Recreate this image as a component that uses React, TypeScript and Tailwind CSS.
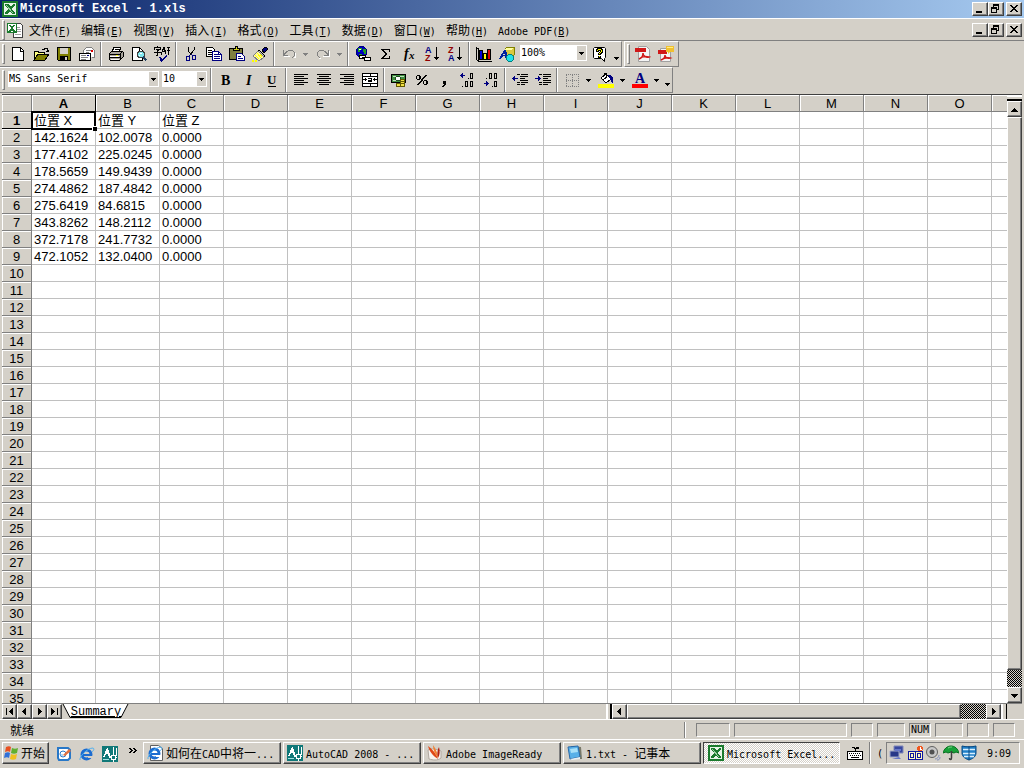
import type { ReactNode } from 'react'

const MENUS = [
  ['文件', 'F'],
  ['编辑', 'E'],
  ['视图', 'V'],
  ['插入', 'I'],
  ['格式', 'O'],
  ['工具', 'T'],
  ['数据', 'D'],
  ['窗口', 'W'],
  ['帮助', 'H'],
  ['Adobe PDF', 'B'],
]

// the last column is only partly in view and carries no letter
const COLS = [...'ABCDEFGHIJKLMNO'.split(''), '']

const DATA = [
  ['位置 X', '位置 Y', '位置 Z'],
  ['142.1624', '102.0078', '0.0000'],
  ['177.4102', '225.0245', '0.0000'],
  ['178.5659', '149.9439', '0.0000'],
  ['274.4862', '187.4842', '0.0000'],
  ['275.6419', '84.6815', '0.0000'],
  ['343.8262', '148.2112', '0.0000'],
  ['372.7178', '241.7732', '0.0000'],
  ['472.1052', '132.0400', '0.0000'],
]

const RAISED = 'border border-t-white border-l-white border-r-[#404040] border-b-[#404040] bg-[#d4d0c8] shadow-[inset_-1px_-1px_0_#808080]'
const SUNKEN = 'border border-t-[#808080] border-l-[#808080] border-r-white border-b-white'
const DITHER = 'bg-[repeating-conic-gradient(#000_0_25%,#d4d0c8_0_50%)] bg-[length:2px_2px]'
const LATIN = "font-['DejaVu_Sans_Mono','Noto_Sans_CJK_SC',monospace] text-[10px]"

// Chinese runs are set at 12px, latin runs in the 6px-wide mono face
function Label({ text, hotkey }: { text: string; hotkey?: string }) {
  const parts = text.match(/[\u4e00-\u9fff]+|[^\u4e00-\u9fff]+/g) ?? []
  return (
    <span className="block whitespace-pre font-['Noto_Sans_CJK_SC',sans-serif] text-xs leading-4">
      {parts.map((p, i) =>
        /[\u4e00-\u9fff]/.test(p) ? (
          <span key={i}>{p}</span>
        ) : (
          <span key={i} className={`${LATIN} leading-none`}>{p}</span>
        )
      )}
      {hotkey && <span className={`${LATIN} leading-none`}>(<u>{hotkey}</u>)</span>}
    </span>
  )
}

function Ico({ children, smooth }: { children: ReactNode; smooth?: boolean }) {
  return (
    <svg viewBox="0 0 16 16" className="w-4 h-4 shrink-0" shapeRendering={smooth ? 'auto' : 'crispEdges'} fill="none" aria-hidden="true">
      {children}
    </svg>
  )
}

function Glyph({ x, y, size, fill = '#000', children, family = 'Liberation Serif', italic }: { x: number; y: number; size: number; fill?: string; children: ReactNode; family?: string; italic?: boolean }) {
  return (
    <text x={x} y={y} fontSize={size} fill={fill} fontFamily={`${family}, serif`} fontWeight="bold" fontStyle={italic ? 'italic' : 'normal'}>
      {children}
    </text>
  )
}

function Tool({ name, children }: { name: string; children: ReactNode }) {
  return (
    <button aria-label={name} className="w-[23px] h-[22px] flex items-center justify-center shrink-0">
      {children}
    </button>
  )
}

function Caret({ wide, dim, low }: { wide?: boolean; dim?: boolean; low?: boolean }) {
  return (
    <button aria-label="更多" className={`${wide ? 'w-[11px]' : 'w-[10px]'} h-[22px] flex items-center justify-center shrink-0 ${low ? 'pt-2' : ''}`}>
      <svg viewBox="0 0 5 3" className="w-[5px] h-[3px]" shapeRendering="crispEdges">
        <path d="M0 0h5v1H4v1H3v1H2V2H1V1H0z" fill={dim ? '#808080' : '#000'} />
      </svg>
    </button>
  )
}

function Sep() {
  return (
    <div className="w-[6px] flex justify-center self-stretch shrink-0">
      <div className="w-[2px] bg-[#808080] border-r border-white" />
    </div>
  )
}

function Handle() {
  return <div className="w-[3px] h-5 ml-[2px] mr-px border border-t-white border-l-white border-r-[#808080] border-b-[#808080] shrink-0" />
}

function Combo({ label, value, width }: { label: string; value: string; width: string }) {
  return (
    <div className={`relative bg-white h-4 shrink-0 ${width}`}>
      <select aria-label={label} className={`appearance-none block w-full h-4 pl-px pr-3 leading-4 outline-none ${LATIN}`}>
        <option>{value}</option>
      </select>
      <span className="absolute right-px top-px w-[9px] h-[14px] bg-[#d4d0c8] flex items-center justify-center pointer-events-none">
        <svg viewBox="0 0 5 3" className="w-[5px] h-[3px]" shapeRendering="crispEdges">
          <path d="M0 0h5v1H4v1H3v1H2V2H1V1H0z" fill="#000" />
        </svg>
      </span>
    </div>
  )
}

function ExcelIcon() {
  return (
    <Ico>
      <path d="M0 0h16v16H0z" fill="#1a7a2c" />
      <path d="M2 2h12v12H2z" fill="#e8f4e8" />
      <path d="M3 3h4l2 3 2-3h2v1l-3 4 3 4v1h-3l-2-3-2 3H3v-1l3-4-3-4z" fill="#1a7a2c" />
      <path d="M4 4l7 8" stroke="#9fd0a4" />
    </Ico>
  )
}

function WinButtons() {
  return (
    <div className="flex mr-[2px]">
      <button aria-label="最小化" className={`w-4 h-[14px] flex items-center justify-center ${RAISED}`}>
        <svg viewBox="0 0 12 10" className="w-3 h-[10px]" shapeRendering="crispEdges"><path d="M2 7h6v2H2z" /></svg>
      </button>
      <button aria-label="还原" className={`w-4 h-[14px] flex items-center justify-center ${RAISED}`}>
        <svg viewBox="0 0 12 10" className="w-3 h-[10px]" shapeRendering="crispEdges">
          <path d="M3 0h6v6H7V5h1V2H4v1H3z" />
          <path d="M1 3h6v6H1zM2 5v3h4V5z" fillRule="evenodd" />
        </svg>
      </button>
      <button aria-label="关闭" className={`w-4 h-[14px] ml-[2px] flex items-center justify-center ${RAISED}`}>
        <svg viewBox="0 0 12 10" className="w-3 h-[10px]" shapeRendering="crispEdges">
          <path d="M2 1h2v1h1v1h2V2h1V1h2v1H9v1H8v1H7v1h1v1h1v1h1v1H8V7H7V6H5v1H4v1H2V7h1V6h1V5h1V4H4V3H3V2H2z" />
        </svg>
      </button>
    </div>
  )
}

function StandardBar() {
  return (
    <div className="flex">
      <div role="toolbar" aria-label="常用" className="h-[26px] flex items-center border border-l-0 border-t-white border-r-[#808080] border-b-[#808080]">
        <Handle />
        <Tool name="新建">
          <Ico><path d="M2.5 1.5h8l3 3v10h-11z" fill="#fff" stroke="#000" /><path d="M10.5 1v4H14" stroke="#000" /></Ico>
        </Tool>
        <Tool name="打开">
          <Ico>
            <path d="M9 3h2V2h3v2h1v2M13 5h3" stroke="#000" />
            <path d="M1 5h4v1h6v3H5l-4 5z" fill="#ffff80" stroke="#000" />
            <path d="M1 14l4-6h11l-4 6z" fill="#808000" stroke="#000" />
          </Ico>
        </Tool>
        <Tool name="保存">
          <Ico>
            <path d="M1.5 1.5h13v13h-12l-1-1z" fill="#808000" stroke="#000" />
            <path d="M4 2h8v6H4z" fill="#d4d0c8" /><path d="M4 10h8v5H4z" fill="#000" /><path d="M9 11h2v3H9z" fill="#d4d0c8" />
          </Ico>
        </Tool>
        <Tool name="电子邮件">
          <Ico>
            <path d="M4.5 8V4.5l3-3h5l3 3v7H13" fill="#fff" stroke="#808080" />
            <path d="M7 4h5M7 6h3" stroke="#808080" /><path d="M12 4h2v2h-2z" fill="#d00" />
            <path d="M.5 7.5h11v7H.5z" fill="#fff" stroke="#000" /><path d="M2 9.5h5M2 11.5h7M2 13h5" stroke="#808080" /><path d="M8 9h2v1H8z" fill="#000080" />
          </Ico>
        </Tool>
        <Sep />
        <Tool name="打印">
          <Ico>
            <path d="M4 6l2-5h7l-2 5" fill="#fff" stroke="#000" /><path d="M7 3h4M6 5h4" stroke="#000" />
            <path d="M1 8l3-3h10l1 1v5l-3 3H2l-1-1z" fill="#a8a49c" stroke="#000" />
            <path d="M1 8.5h11M1 11.5h12M12 8l3-3M12 14V8" stroke="#000" /><path d="M2 10h9M3 13h8" stroke="#fff" /><path d="M8 9h2v1H8z" fill="#ffff00" />
          </Ico>
        </Tool>
        <Tool name="打印预览">
          <Ico>
            <path d="M1.5 1.5h7l3 3v10h-10z" fill="#fff" stroke="#000" /><path d="M8.5 1v4H12" stroke="#000" />
            <circle cx="10" cy="8.5" r="3.5" fill="#80e8f0" stroke="#404040" /><path d="M9 7h2M8 9h1" stroke="#fff" />
            <path d="M12 11l3.5 3.5" stroke="#204060" strokeWidth="2" />
          </Ico>
        </Tool>
        <Tool name="拼写检查">
          <Ico>
            <path d="M.5 3.5v-2h6v2M3.5 0v2M2 3.5h3L3.5 5v4H2M0 6.5h7" stroke="#000" />
            <path d="M7 8.5L10 1l2 7M8 5.5h4M13 1.5h2l-1 3h1l-1 4" stroke="#000" />
            <path d="M5 11h1l2 2 5-5v2l-5 6H7z" fill="#000080" />
          </Ico>
        </Tool>
        <Sep />
        <Tool name="剪切">
          <Ico>
            <path d="M5 1v3l3 5M11 1v3L7 9" stroke="#000" />
            <path d="M8 8l2 2M7 9l-1 1" stroke="#000080" />
            <rect x="3.5" y="10.5" width="3" height="4" stroke="#000080" /><rect x="9.5" y="9.5" width="3" height="4" stroke="#000080" />
          </Ico>
        </Tool>
        <Tool name="复制">
          <Ico>
            <path d="M.5 1.5h6l2 2v7h-8z" fill="#fff" stroke="#000" /><path d="M2 4.5h4M2 6.5h4M2 8.5h4" stroke="#000" />
            <path d="M6.5 5.5h6l3 3v6h-9z" fill="#fff" stroke="#000080" /><path d="M8 8.5h4M8 10.5h6M8 12.5h6M12.5 5v3H15" stroke="#000080" />
          </Ico>
        </Tool>
        <Tool name="粘贴">
          <Ico>
            <path d="M.5 2.5h13v11H.5z" fill="#808040" stroke="#000" /><path d="M4 4.5V2h2V.5h2V2h2v2.5z" fill="#d4d020" stroke="#000" />
            <path d="M7.5 7.5h5l3 3v4h-8z" fill="#fff" stroke="#000080" /><path d="M9 10.5h3M9 12.5h5" stroke="#000080" />
          </Ico>
        </Tool>
        <Tool name="格式刷">
          <Ico>
            <path d="M10 4l3-3 2 1v2l-3 3z" fill="#000080" stroke="#000" />
            <path d="M7 4l6 6-1 1-6-6z" fill="#c0c0c0" stroke="#000" />
            <path d="M6 5l6 6-5 4-6-5z" fill="#fff8a0" stroke="#808080" /><path d="M5 7l4 5M3 9l4 4M8 8l2 3" stroke="#ffff00" />
            <path d="M0 14.5h6" stroke="#ffff00" strokeWidth="2" strokeDasharray="2 1" />
          </Ico>
        </Tool>
        <Sep />
        <Tool name="撤消">
          <Ico>
            <path d="M3 10.5h6M14.5 7v4h-2" stroke="#fff" />
            <path d="M2 4h1v3h1V6h1V5h2V4h5v1h1v1h1v4h-1v1h-1v1h-1v-1h1v-1h1V6h-1V5H7v1H6v1H5v1H4v1h3v1H2z" fill="#808080" />
          </Ico>
        </Tool>
        <Caret wide dim />
        <Tool name="恢复">
          <Ico>
            <path d="M8 10.5h6.500V5M4 12h2" stroke="#fff" />
            <path d="M14 4h-1v3h-1V6h-1V5H9V4H4v1H3v1H2v4h1v1h1v1h1v-1H4v-1H3V6h1V5h5v1h1v1h1v1h1v1H9v1h5z" fill="#808080" />
          </Ico>
        </Tool>
        <Caret wide dim />
        <Sep />
        <Tool name="超链接">
          <Ico>
            <circle cx="6.5" cy="6" r="5.5" fill="#0000c0" stroke="#000080" />
            <path d="M3 2h4v2H5v2H3zM8 3h3v5H9V6H8zM4 8h3v3H5z" fill="#20a020" /><path d="M4 3h2v1H4z" fill="#fff" />
            <rect x="4.5" y="9.5" width="6" height="3" rx="1" fill="#fff" stroke="#000" /><rect x="9.5" y="11.5" width="6" height="3" rx="1" fill="#fff" stroke="#000" /><path d="M7 11.5h5" stroke="#000" />
          </Ico>
        </Tool>
        <Tool name="自动求和">
          <Ico><path d="M3 3h9v3h-1V4H6l3 4-4 4h6v-2h1v3H3v-1l4-4-4-4z" fill="#000" /></Ico>
        </Tool>
        <Tool name="粘贴函数">
          <Ico smooth><Glyph x={3} y={12} size={14} italic>f</Glyph><Glyph x={8} y={13} size={11} italic>x</Glyph></Ico>
        </Tool>
        <Tool name="升序排序">
          <Ico>
            <Glyph x={1} y={7} size={9} fill="#000080" family="Liberation Sans">A</Glyph>
            <Glyph x={1} y={15} size={9} fill="#900000" family="Liberation Sans">Z</Glyph>
            <path d="M12 1h1v10h2v1h-1v1h-1v1h-1v-1h-1v-1h-1v-1h2z" fill="#000" />
          </Ico>
        </Tool>
        <Tool name="降序排序">
          <Ico>
            <Glyph x={1} y={7} size={9} fill="#900000" family="Liberation Sans">Z</Glyph>
            <Glyph x={1} y={15} size={9} fill="#000080" family="Liberation Sans">A</Glyph>
            <path d="M12 1h1v10h2v1h-1v1h-1v1h-1v-1h-1v-1h-1v-1h2z" fill="#000" />
          </Ico>
        </Tool>
        <Sep />
        <Tool name="图表向导">
          <Ico>
            <path d="M.5 1v12.500l2 2H16M1 2.500h1v12" stroke="#000" />
            <path d="M3.5 4.5h3v9h-3z" fill="#0000e0" stroke="#000" /><path d="M7.5 7.500h3v6h-3z" fill="#ffff00" stroke="#000" /><path d="M11.5 3.5h3v10h-3z" fill="#e00000" stroke="#000" />
          </Ico>
        </Tool>
        <Tool name="绘图">
          <Ico>
            <path d="M6 3l2-2h7v8l-2 2H6z" fill="#d8c840" stroke="#808000" /><path d="M7 2h7l-2 2H6z" fill="#ffffa0" />
            <path d="M0 13L5 4h2l2 9H7l-1-3H4l-2 3z" fill="#0020a0" /><path d="M5 7l1 2H4z" fill="#d4d0c8" />
            <circle cx="11" cy="12" r="3.5" fill="#20e0e8" stroke="#008080" />
          </Ico>
        </Tool>
        <div className="pl-[2px] pb-[2px]"><Combo label="显示比例" value="100%" width="w-[67px]" /></div>
        <div className="w-px" />
        <Tool name="帮助">
          <Ico smooth>
            <path d="M2.5 1.5h10l1 1v9l-1 1v3l-3-3h-7l-1-1v-9z" fill="#fff" stroke="#000" />
            <path d="M4 5V3h1V2h5v1h1v4h-1v1H9v1H6V7h1V6h1V5H7v1H4zM6 10h3v2H6z" fill="#000" />
            <path d="M5 5V4h1V3h3v1h1v2H9v1H8v1H7V7h1V6h1V4H6v1zM7 10h1v1H7z" fill="#ffff00" />
          </Ico>
        </Tool>
        <Caret low />
      </div>
      <div role="toolbar" aria-label="PDF" className="h-[26px] flex items-center border border-t-white border-l-white border-r-[#808080] border-b-[#808080] ml-[2px] pr-px">
        <Handle />
        <Tool name="转换为 PDF">
          <Ico smooth>
            <path d="M3.5.5h8l3 3v12h-11z" fill="#f4f4f4" stroke="#a0a0a0" /><path d="M0 2h11v4H0z" fill="#d01818" />
            <path d="M4 13c3-1 4-4 4-6 0 3 3 5 6 4-4-1-7-1-10 2z" stroke="#d01818" strokeWidth="1.5" />
          </Ico>
        </Tool>
        <Tool name="转换并发送">
          <Ico smooth>
            <path d="M2.5 2.5h8l2 3v10h-10z" fill="#f4f4f4" stroke="#a0a0a0" /><path d="M0 4h9v4H0z" fill="#d01818" />
            <path d="M3 14c3-1 4-3 4-5 0 2 2 4 5 3-4-1-6 0-9 2z" stroke="#d01818" strokeWidth="1.5" />
            <path d="M8 0h8v6h-4l-2 2V6H8z" fill="#f0c030" /><path d="M9 1.5h6" stroke="#fff080" />
          </Ico>
        </Tool>
      </div>
    </div>
  )
}

function FormatBar() {
  return (
    <div className="flex">
      <div role="toolbar" aria-label="格式" className="h-[26px] flex items-center border border-l-0 border-t-white border-r-[#808080] border-b-[#808080]">
        <Handle />
        <div className="flex gap-[3px] pl-[2px] pr-px pb-[2px]">
          <Combo label="字体" value="MS Sans Serif" width="w-[151px]" />
          <Combo label="字号" value="10" width="w-[45px]" />
        </div>
        <Sep />
        <Tool name="加粗"><Ico smooth><Glyph x={3} y={13} size={14}>B</Glyph></Ico></Tool>
        <Tool name="倾斜"><Ico smooth><Glyph x={5} y={13} size={14} italic>I</Glyph></Ico></Tool>
        <Tool name="下划线"><Ico smooth><Glyph x={3} y={12} size={13}>U</Glyph><path d="M4 14h8v1H4z" fill="#000" /></Ico></Tool>
        <Sep />
        <Tool name="左对齐"><Ico><path d="M1 2.5h14M1 4.5h10M1 6.5h14M1 8.5h10M1 10.5h14M1 12.5h10" stroke="#000" /></Ico></Tool>
        <Tool name="居中"><Ico><path d="M1 2.5h14M3 4.5h10M1 6.5h14M3 8.5h10M1 10.5h14M3 12.5h10" stroke="#000" /></Ico></Tool>
        <Tool name="右对齐"><Ico><path d="M1 2.5h14M5 4.5h10M1 6.5h14M5 8.5h10M1 10.5h14M5 12.5h10" stroke="#000" /></Ico></Tool>
        <Tool name="合并及居中">
          <Ico>
            <path d="M0 1h16v14H0z" fill="#fff" /><path d="M.5 1.5h15v13H.5zM0 4.5h16M0 11.5h16M8.5 1v4M8.5 11v4" stroke="#000" />
            <path d="M1 7.500h4M11 7.500h4M3.500 6v3M12.500 6v3" stroke="#000" /><path d="M6 6h4v4H6V8h3V7H6zM7 9h2v0H7z" fill="#000" />
          </Ico>
        </Tool>
        <Sep />
        <Tool name="货币样式">
          <Ico>
            <path d="M.5 2.5h14v8H.5z" fill="#409040" stroke="#000" /><path d="M2 4.5h11M2 8.5h5" stroke="#c0e0c0" /><circle cx="7" cy="6.5" r="2.5" fill="#fff" stroke="#205020" />
            <path d="M9.500 7.500h4v7h-4zM5.500 11.500h4v3h-4z" fill="#f0e040" stroke="#605800" /><path d="M10 9.5h3M10 11.5h3" stroke="#605800" />
          </Ico>
        </Tool>
        <Tool name="百分比样式">
          <Ico><path d="M2 4h1V3h3v1h1v3H6v1H3V7H2zM3 4v3h2V4zM9 9h1V8h3v1h1v3h-1v1h-3v-1H9zM10 9v3h2V9z" fill="#000" fillRule="evenodd" /><path d="M12 3l-8 10" stroke="#000" strokeWidth="1.5" /></Ico>
        </Tool>
        <Tool name="千位分隔样式">
          <Ico><path d="M6 9h3v4H8v1H7v1H5v-1h1v-1h1v-1H6z" fill="#000" /></Ico>
        </Tool>
        <Tool name="增加小数位数">
          <Ico>
            <path d="M0 3h1V2h1V1h1v2h2v1H3v2H2V5H1V4H0z" fill="#000080" />
            <path d="M8 6h1v1H8zM2 14h1v1H2z" fill="#000" /><rect x="10.5" y="1.500" width="2" height="5" stroke="#000" /><rect x="5.5" y="9.500" width="2" height="5" stroke="#000" /><rect x="10.5" y="9.500" width="2" height="5" stroke="#000" />
          </Ico>
        </Tool>
        <Tool name="减少小数位数">
          <Ico>
            <path d="M1 11h2V9h1v1h1v1h1v1H5v1H4v1H3v-2H1z" fill="#000080" />
            <path d="M3 6h1v1H3zM9 14h1v1H9z" fill="#000" /><rect x="6.5" y="1.500" width="2" height="5" stroke="#000" /><rect x="11.5" y="1.500" width="2" height="5" stroke="#000" /><rect x="11.5" y="9.500" width="2" height="5" stroke="#000" />
          </Ico>
        </Tool>
        <Sep />
        <Tool name="减少缩进量">
          <Ico><path d="M5 2.5h3M9 2.5h7M8 4.5h8M8 6.5h5M8 8.5h8M5 10.5h3M9 10.5h7M5 12.5h3M9 12.5h4" stroke="#000" /><path d="M0 6h1V5h1V4h1v2h3v1H3v2H2V8H1V7H0z" fill="#000080" /></Ico>
        </Tool>
        <Tool name="增加缩进量">
          <Ico><path d="M4 2.5h3M8 2.5h8M8 4.5h8M8 6.5h5M8 8.5h8M4 10.5h3M8 10.5h8M4 12.5h3M8 12.5h5" stroke="#000" /><path d="M0 6h3V4h1v1h1v1h1v1H5v1H4v1H3V7H0z" fill="#000080" /></Ico>
        </Tool>
        <Sep />
        <Tool name="边框">
          <Ico><path d="M2 2.5h12M2 8.5h12M2 14.5h12M2.5 3v12M8.5 3v12M14.5 2v13" stroke="#808080" strokeDasharray="1 1" /></Ico>
        </Tool>
        <Caret wide />
        <Tool name="填充颜色">
          <Ico>
            <path d="M0 12h16v4H0z" fill="#ffff00" />
            <path d="M3 6l5-4 5 5-5 4z" fill="#fff" stroke="#000" /><path d="M6 4V1h2v5M5 8l4-3" stroke="#000" /><path d="M10 3h3l2 3v5h-1l-2-4z" fill="#000080" />
          </Ico>
        </Tool>
        <Caret wide />
        <Tool name="字体颜色">
          <Ico smooth><Glyph x={3} y={11} size={14} fill="#000080">A</Glyph><path d="M0 12h16v4H0z" fill="#ff0000" /></Ico>
        </Tool>
        <Caret wide />
        <Caret low />
      </div>
    </div>
  )
}

function ArrowButton({ dir, size }: { dir: 'up' | 'down' | 'left' | 'right' | 'first' | 'last'; size: string }) {
  const paths = {
    up: 'M3 2h1v1h1v1h1v1h1v1H0V5h1V4h1V3h1z',
    down: 'M0 2h7v1H6v1H5v1H4v1H3V5H2V4H1V3H0z',
    left: 'M5 0v7H4V6H3V5H2V4H1V3h1V2h1V1h1V0z',
    right: 'M2 0v7h1V6h1V5h1V4h1V3H5V2H4V1H3V0z',
    first: 'M0 0h1v7H0zM7 0v7H6V6H5V5H4V4H3V3h1V2h1V1h1V0z',
    last: 'M6 0h1v7H6zM0 0v7h1V6h1V5h1V4h1V3H3V2H2V1H1V0z',
  }
  return (
    <button aria-label={dir} className={`${size} flex items-center justify-center shrink-0 ${RAISED}`}>
      <svg viewBox="0 0 7 7" className="w-[7px] h-[7px]" shapeRendering="crispEdges"><path d={paths[dir]} /></svg>
    </button>
  )
}

function Sheet() {
  const head = 'bg-[#d4d0c8] border-r border-b border-[#808080] p-0 pt-[2px] text-center shadow-[inset_1px_1px_0_#fff]'
  return (
    <div className="flex-1 min-w-0 overflow-hidden bg-white">
      <table className="table-fixed border-separate border-spacing-0 w-[1054px] text-[13px] leading-[14px] font-['Liberation_Sans','Noto_Sans_CJK_SC',sans-serif]">
        <colgroup>
          <col className="w-[30px]" />
          {COLS.map(c => <col key={c} className="w-16" />)}
        </colgroup>
        <thead>
          <tr className="h-[17px]">
            <th className={head} />
            {COLS.map(c => (
              <th key={c} scope="col" className={`${head} ${c === 'A' ? 'font-bold border-r-black' : 'font-normal'}`}>{c}</th>
            ))}
          </tr>
        </thead>
        <tbody>
          {Array.from({ length: 35 }, (_, r) => (
            <tr key={r} className="h-[17px]">
              <th scope="row" className={`${head} ${r === 0 ? 'font-bold border-b-black' : 'font-normal'}`}>{r + 1}</th>
              {COLS.map((c, i) => (
                <td key={c} className="relative p-0 pl-[2px] pt-[2px] border-r border-b border-[#c0c0c0] whitespace-nowrap">
                  {DATA[r]?.[i]}
                  {r === 0 && i === 0 && (
                    <span className="absolute z-10 -left-px -right-px -top-px -bottom-[2px] border-2 border-black">
                      <span className="absolute -right-[3px] -bottom-[3px] w-[5px] h-[5px] bg-black border-t border-l border-white" />
                    </span>
                  )}
                </td>
              ))}
            </tr>
          ))}
        </tbody>
      </table>
    </div>
  )
}

function SheetTabs() {
  return (
    <div className="h-4 flex border-t border-[#808080] shrink-0">
      <ArrowButton dir="first" size="w-[15px]" />
      <ArrowButton dir="left" size="w-[15px]" />
      <ArrowButton dir="right" size="w-[15px]" />
      <ArrowButton dir="last" size="w-[15px]" />
      <div className="flex-1 flex">
        <button className="relative w-[68px] h-[15px] flex items-center justify-center">
          <svg viewBox="0 0 68 15" className="absolute inset-0 w-full h-full" aria-hidden="true">
            <path d="M1 0l7 14h51l7-14z" fill="#fff" />
            <path d="M1 0l7 13.5h51L66 0" fill="none" stroke="#000" />
          </svg>
          <span className="relative text-xs leading-[14px] underline underline-offset-1 font-['Liberation_Mono',monospace]">Summary</span>
        </button>
      </div>
      <div className="w-[416px] flex">
        <div className="w-[6px] border-l-2 border-white border-r-2 border-r-black" />
        <ArrowButton dir="left" size="w-[15px]" />
        <div className={`flex-1 ${RAISED}`} />
        <div className={`w-[25px] ${DITHER}`} />
        <ArrowButton dir="right" size="w-[15px]" />
        <div className="w-[6px] border-l-2 border-white border-r border-r-black" />
        <div className="w-[15px]" />
      </div>
    </div>
  )
}

function StatusBar() {
  const cells = ['w-[34px]', 'w-[113px]', 'w-[22px]', 'w-[28px]', 'w-[22px]', 'w-[28px]', 'w-[22px]', 'w-[22px]']
  return (
    <div className="h-5 flex items-center border-t border-white pl-[10px] pr-[9px] shrink-0">
      <Label text="就绪" />
      <div className="ml-auto w-[2px] h-4 bg-[#808080] border-r border-white mr-[10px]" />
      <div className="flex gap-1">
        {cells.map((w, i) => (
          <div key={i} className={`${w} h-[14px] flex items-center justify-center ${SUNKEN}`}>
            {i === 4 && <span className={LATIN}>NUM</span>}
          </div>
        ))}
      </div>
    </div>
  )
}

function IeIcon({ page }: { page?: boolean }) {
  return (
    <Ico smooth>
      {page && <path d="M3.5.5h8l4 3v12h-12z" fill="#fff" stroke="#606060" />}
      <circle cx="7.5" cy="8.5" r="4.5" stroke="#1c6cd0" strokeWidth="3" />
      <path d="M4 9h9" stroke="#1c6cd0" strokeWidth="2" />
      <path d="M9 10h6v2H9z" fill={page ? '#fff' : '#d4d0c8'} />
      <path d="M1 14C0 11 8 2 14 2c2 1 0 3-1 4" stroke="#50b0f0" />
    </Ico>
  )
}

function CadIcon() {
  return (
    <Ico>
      <path d="M0 0h16v16H0z" fill="#107878" />
      <path d="M1 11l4-9h1l3 9H7L6 8H4l-1 3z" fill="#fff" />
      <path d="M11.5 1v9M15 11.5h-2M10 11.5H7M11.500 13v3M14.500 2v8" stroke="#fff" /><rect x="9.5" y="9.5" width="4" height="4" stroke="#fff" />
      <path d="M1 13.5h6" stroke="#a0e0e0" />
    </Ico>
  )
}

function ReadyIcon() {
  return (
    <Ico smooth>
      <path d="M1 5c4-2 8-1 13 1v7c-4 3-8 2-12 1z" fill="#f8f4f0" stroke="#b0a8a0" />
      <path d="M1 1c3 2 8 7 10 13C6 11 2 6 1 1z" fill="#e04818" /><path d="M6 0c2 3 5 8 5 13C8 9 6 5 6 0z" fill="#f08030" /><path d="M12 2c1 4 1 8-1 11-1-4-1-8 1-11z" fill="#b02010" />
    </Ico>
  )
}

function NoteIcon() {
  return (
    <Ico smooth>
      <path d="M4 1l10 1 1 12H5z" fill="#787868" /><path d="M1 2l10-1 2 11-10 2z" fill="#58b0e8" stroke="#2868a8" />
      <path d="M3 4l7-1 1 4-7 1z" fill="#a8e0f8" /><path d="M3 14l10-2v2l-8 1z" fill="#e8f0f4" />
    </Ico>
  )
}

function TaskButton({ icon, text }: { icon: ReactNode; text: string }) {
  return (
    <button className={`flex-1 max-w-[138px] h-[22px] flex items-center gap-[3px] pl-[3px] overflow-hidden ${RAISED}`}>
      {icon}
      <Label text={text} />
    </button>
  )
}

function Taskbar() {
  return (
    <div className="h-[29px] flex items-start pt-[2px] pl-[2px] pr-1 border-t border-white shrink-0">
      <button className={`w-[47px] h-[22px] flex items-center gap-px pl-px ${RAISED}`}>
        <Ico smooth>
          <path d="M2 2c2-1 4-1 5 0L6 7C5 6 3 6 1 7z" fill="#e85020" /><path d="M8 3c2 1 4 1 6 0l-1 5c-2 1-4 1-6 0z" fill="#60b030" />
          <path d="M1 8c2-1 4-1 5 0l-1 5c-1-1-3-1-5 0z" fill="#3070d8" /><path d="M7 9c2 1 4 1 6 0l-1 5c-2 1-4 1-6 0z" fill="#f0c020" />
        </Ico>
        <Label text="开始" />
      </button>
      <div className="w-[94px] h-[22px] pt-[2px] flex items-center pl-[7px] gap-[7px]">
        <button aria-label="显示桌面">
          <Ico smooth><path d="M2 2h10l2 2v8l-2 2H3l-1-2z" fill="#fff" stroke="#2878c8" strokeWidth="2" /><circle cx="7" cy="8" r="3" stroke="#2878c8" /><path d="M7 9l6-6 2 2-6 5z" fill="#e07040" /><path d="M4 9h3" stroke="#60b0f0" /></Ico>
        </button>
        <button aria-label="Internet Explorer"><IeIcon /></button>
        <button aria-label="AutoCAD"><CadIcon /></button>
        <button aria-label="更多" className="pb-2 pl-1">
          <svg viewBox="0 0 8 5" className="w-2 h-[5px]" shapeRendering="crispEdges"><path d="M0 0h2v1h1v1h1v1H3v1H2v1H0V4h1V3h1V2H1V1H0zM4 0h2v1h1v1h1v1H7v1H6v1H4V4h1V3h1V2H5V1H4z" /></svg>
        </button>
      </div>
      <div className="flex-1 flex gap-[2px]">
        <TaskButton icon={<IeIcon page />} text="如何在CAD中将一..." />
        <TaskButton icon={<CadIcon />} text="AutoCAD 2008 - ..." />
        <TaskButton icon={<ReadyIcon />} text="Adobe ImageReady" />
        <TaskButton icon={<NoteIcon />} text="1.txt - 记事本" />
        <button className="flex-1 max-w-[137px] h-[22px] flex items-center gap-[3px] pl-1 overflow-hidden border border-t-[#404040] border-l-[#404040] border-r-white border-b-white bg-[repeating-conic-gradient(#fff_0_25%,#d4d0c8_0_50%)] bg-[length:2px_2px]">
          <ExcelIcon />
          <Label text="Microsoft Excel..." />
        </button>
      </div>
      <div className="flex items-center h-[22px] shrink-0">
        <button aria-label="键盘" className="w-[18px] flex justify-center">
          <svg viewBox="0 0 16 14" className="w-4 h-[14px]" shapeRendering="crispEdges" fill="none">
            <path d="M5 1.5h2v1h2v-1h2v1H8.500V5" stroke="#000" /><path d="M.5 5.5h15v8H.5z" fill="#fff" stroke="#000" />
            <path d="M2 7.5h12M3 9.5h11" stroke="#000" strokeDasharray="1 1" /><path d="M4 11.5h8" stroke="#000" />
          </svg>
        </button>
        <div className="w-[2px] h-[22px] bg-[#808080] border-r border-white ml-[5px] mr-[3px]" />
        <span className={`${LATIN} w-[12px] text-center`}>(</span>
        <div className={`w-[134px] h-[22px] flex items-center gap-[2px] pl-[2px] pr-2 ${SUNKEN}`}>
          <Ico smooth><path d="M5 1h9v7H5z" fill="#3848a0" stroke="#8088b8" /><path d="M1 6h9v6H1z" fill="#283888" stroke="#a0a8c8" /><path d="M6 4h6v2H6zM3 14h9l-2-2" fill="#6878c8" /></Ico>
          <Ico><path d="M1 6h6l1 1 1-1h6v8H9l-1 1-1-1H1z" fill="#fff8c0" stroke="#1018a0" /><path d="M8 7v7M3 8h3v4H3zM10 8h3v4h-3z" stroke="#1018a0" /><circle cx="13" cy="3.5" r="3" fill="#f05820" /><path d="M13 2v2h2" stroke="#fff" /></Ico>
          <Ico smooth><circle cx="7" cy="7" r="5.5" fill="#c8c8c8" stroke="#606060" /><circle cx="7" cy="7" r="2.5" fill="#505050" /><path d="M10 14c2 0 4-2 4-4M12 15c2 0 3-1 3-3" stroke="#8090c0" /></Ico>
          <Ico smooth><path d="M0 8c1-4 4-7 8-7s7 3 8 7l-3-1-2 1-3-1-3 1-2-1z" fill="#18a038" stroke="#087020" /><path d="M5 3c2-1 3-1 4-1" stroke="#80e090" /><path d="M8.5 6v7c0 2-2 2-2 0" stroke="#404040" strokeWidth="1.5" /></Ico>
          <Ico smooth><path d="M1 1c3 1 11 1 14 0v7c0 4-4 6-7 7-3-1-7-3-7-7z" fill="#2080c8" stroke="#084880" /><path d="M2 4.5h12M2 8.5h12M3 11.5h10" stroke="#d8f0ff" strokeWidth="1.5" /><path d="M8 1v14" stroke="#084880" /></Ico>
          <span className={`${LATIN} ml-auto`}>9:09</span>
        </div>
      </div>
    </div>
  )
}

export default function App() {
  return (
    <div className="h-screen flex flex-col bg-[#d4d0c8] text-black overflow-hidden">
      <header className="h-[18px] flex items-center justify-between pl-[2px] bg-linear-to-r/srgb from-[#0a246a] to-[#a6caf0] shrink-0">
        <h1 className="flex items-center gap-[2px] text-white font-bold text-xs leading-4 font-['Liberation_Mono',monospace]">
          <ExcelIcon />
          Microsoft Excel - 1.xls
        </h1>
        <WinButtons />
      </header>

      <nav className="h-[23px] flex items-center border-y border-t-white border-b-[#808080] shrink-0">
        <Handle />
        <div className="w-[18px] pl-px flex">
          <Ico>
            <path d="M6.5 1.5h7l2 2v12h-9z" fill="#fff" stroke="#404040" /><path d="M8 5h5M10 7h4M10 9h4M8 12h6" stroke="#a0a0a0" />
            <path d="M0 1h10v10H0z" fill="#1a7a2c" /><path d="M1 2h8v8H1z" fill="#fff" /><path d="M1 3h3l1 2 1-2h2L6 6l3 4H6L5 8 4 10H1l3-4z" fill="#1a7a2c" />
          </Ico>
        </div>
        {MENUS.map(([name, key]) => (
          <button key={key} className="px-[5px]">
            <Label text={name} hotkey={key} />
          </button>
        ))}
        <div className="ml-auto"><WinButtons /></div>
      </nav>

      <div className="shrink-0">
        <StandardBar />
        <FormatBar />
      </div>

      <main className="flex-1 min-h-0 flex flex-col pr-[2px] pl-[2px] pt-px">
        <div className="flex-1 min-h-0 flex border-t border-[#404040]">
          <Sheet />
          <div className="w-[15px] flex flex-col bg-[#d4d0c8] shrink-0">
            <div className="h-[6px] border-t-2 border-white border-b-2 border-b-black shrink-0" />
            <ArrowButton dir="up" size="w-[15px] h-4" />
            <div className={`flex-1 ${RAISED}`} />
            <div className={`h-[17px] shrink-0 ${DITHER}`} />
            <ArrowButton dir="down" size="w-[15px] h-4" />
          </div>
        </div>
        <SheetTabs />
      </main>

      <StatusBar />
      <Taskbar />
    </div>
  )
}
